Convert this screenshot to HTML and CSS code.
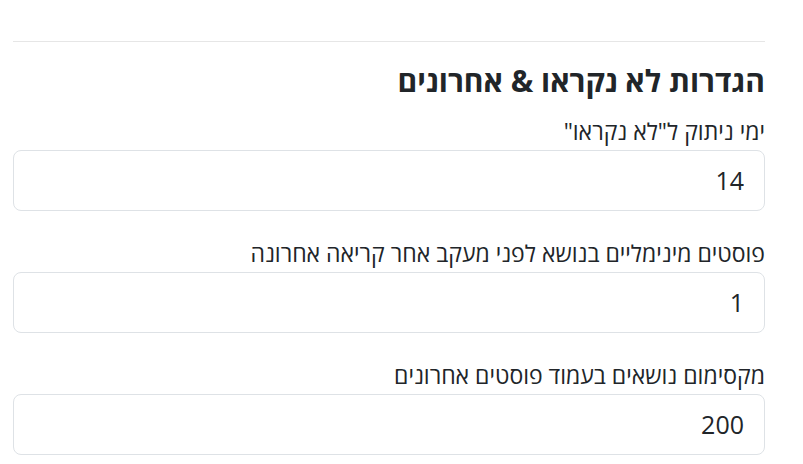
FILE: index.html
```html
<!DOCTYPE html>
<html lang="he" dir="rtl">
<head>
<meta charset="utf-8">
<title>הגדרות</title>
<link rel="stylesheet" href="styles.css">
</head>
<body>
<div class="page">
  <p class="help-text">מספר הימים שלאחר מכן נושא ייחשב כנקרא</p>
  <hr class="divider">
  <h4 class="section-title">הגדרות לא נקראו &amp; אחרונים</h4>
  <div class="field">
    <label class="field-label" for="f1">ימי ניתוק ל"לא נקראו"</label>
    <input class="field-input" id="f1" type="text" value="14">
  </div>
  <div class="field">
    <label class="field-label" for="f2">פוסטים מינימליים בנושא לפני מעקב אחר קריאה אחרונה</label>
    <input class="field-input" id="f2" type="text" value="1">
  </div>
  <div class="field">
    <label class="field-label" for="f3">מקסימום נושאים בעמוד פוסטים אחרונים</label>
    <input class="field-input" id="f3" type="text" value="200">
  </div>
</div>
</body>
</html>
```
FILE: styles.css
```css
html, body {
  margin: 0;
  padding: 0;
  background: #ffffff;
}
body {
  font-family: "Open Sans", "DejaVu Sans", sans-serif;
  color: #212529;
  font-size: 23px;
  line-height: 30px;
  overflow: hidden;
}
.page {
  padding: 0 38px 0 13px;
}
.help-text {
  margin: -23px 0 0 0;
  font-size: 17.5px;
  line-height: 24px;
  color: #6c757d;
  white-space: nowrap;
}
.divider {
  margin: 40px 0 0 0;
  border: 0;
  border-top: 1px solid #e6e6e6;
  height: 0;
}
.section-title {
  margin: 21px 0 17px 0;
  font-size: 30px;
  font-weight: 700;
  line-height: 36px;
}
.field {
  margin-bottom: 27px;
  display: flex;
  flex-direction: column;
}
.field-label {
  display: block;
  margin-bottom: 4px;
  line-height: 30px;
}
.field-input {
  box-sizing: border-box;
  height: 61px;
  padding: 0 20px 2px 20px;
  font-family: inherit;
  font-size: 25px;
  color: #212529;
  border: 1px solid #dee2e6;
  border-radius: 8px;
  background: #fff;
  direction: rtl;
  outline: none;
}
```
